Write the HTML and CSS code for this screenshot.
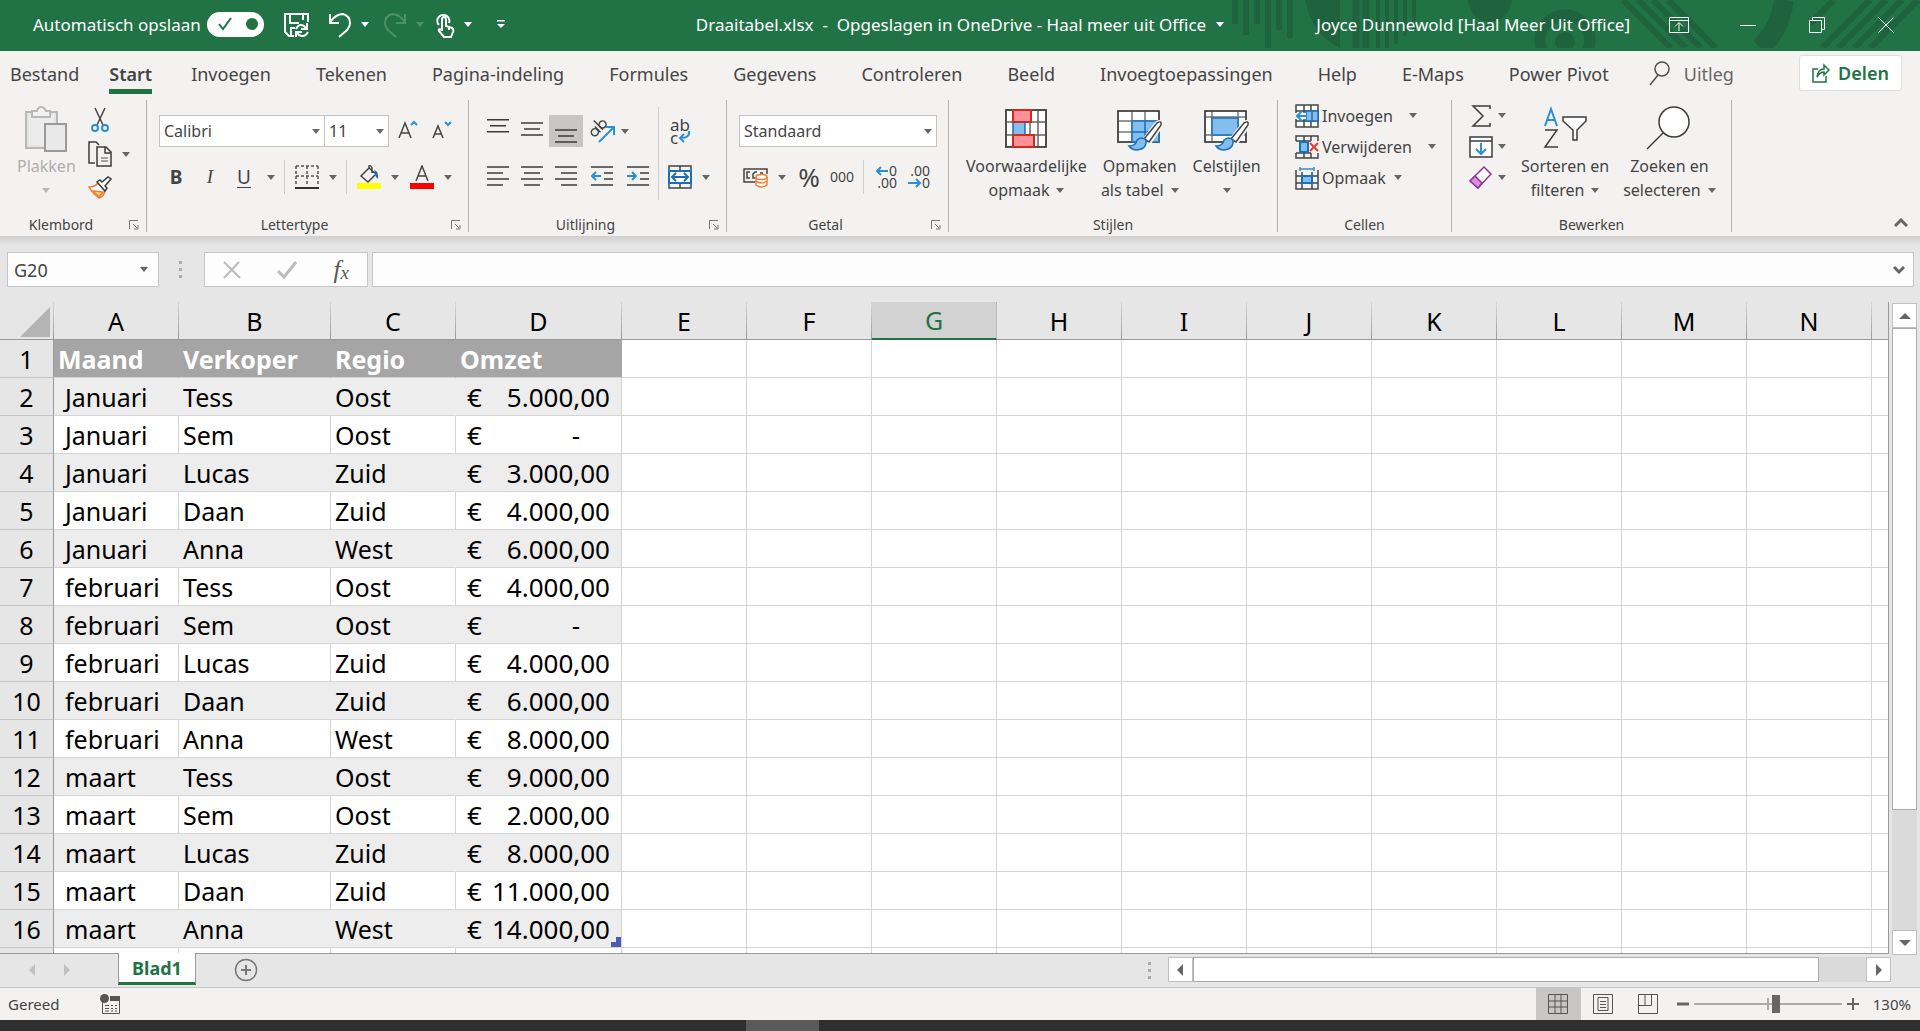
FILE: index.html
```html
<!DOCTYPE html>
<html lang="nl">
<head>
<meta charset="utf-8">
<title>Draaitabel.xlsx - Excel</title>
<link rel="stylesheet" href="styles.css">
</head>
<body>
<header class="titlebar">
  <svg class="titlebar-art" width="690" height="48" viewBox="0 0 690 48" aria-hidden="true">
    <g fill="none" stroke="#1e633d" stroke-width="6">
      <path d="M5 0V24M16 0V35M27 0V24M38 0V48M49 0V30M60 0V38"/>
      <path d="M126 0V48M136 0V48" stroke-width="7"/>
      <path d="M148 0V48M157 0V48M166 0V44M175 0V36M184 0V30" stroke-width="4"/>
      <circle cx="335" cy="40" r="25" stroke-width="11"/>
      <path d="M393 0L441 48M408 0L456 48M423 0L471 48M438 0L486 48"/>
      <path d="M554 0Q550 30 530 48" stroke-width="20"/>
      <path d="M592 48L640 0M608 48L656 0M624 48L672 0M640 48L688 0M580 24L604 0"/>
    </g>
    <path fill="#1e633d" d="M75 0H110V48Q82 35 75 0ZM238 0H282Q278 22 260 22T238 0Z"/>
    <circle cx="335" cy="42" r="10" fill="#1e633d"/>
  </svg>
  <div class="quick">
    <label class="autosave" for="autosave">Automatisch opslaan</label>
    <span class="switch"><input type="checkbox" id="autosave" checked><svg width="57" height="25" viewBox="0 0 57 25"><path d="M12 12L16 17L24 6" fill="none" stroke="#217346" stroke-width="2"/><ellipse cx="45" cy="12" rx="6" ry="6" fill="#217346"/></svg></span>
    <button class="qbtn save" aria-label="Opslaan"><svg width="26" height="26" viewBox="0 0 26 26" fill="none" stroke="#fff" stroke-width="2"><path d="M10 24H5L1 20V2H24V10M6 2V11H15M19 2V8M7 24V16H11"/><path d="M12 17Q15 11 20 14L23 17M23 11V17H17M24 20Q21 26 15 23L12 20M12 25V20H18"/></svg></button>
    <button class="qbtn" aria-label="Ongedaan maken"><svg width="24" height="26" viewBox="0 0 24 26" fill="none" stroke="#fff" stroke-width="2"><path d="M2 2V11H11M2 10Q8 2 15 2Q22 4 22 11Q22 15 18 19L11 25"/></svg></button>
    <i class="caret light"></i>
    <button class="qbtn redo" aria-label="Opnieuw"><svg width="24" height="26" viewBox="0 0 24 26" fill="none" stroke="#4d9169" stroke-width="2"><path d="M22 2V11H13M22 10Q16 2 9 2Q2 4 2 11Q2 15 6 19L13 25"/></svg></button>
    <i class="caret dim"></i>
    <button class="qbtn touch" aria-label="Aanraakmodus"><svg width="20" height="26" viewBox="0 0 20 26" fill="none" stroke="#fff" stroke-width="2"><path d="M4 13A6 6 0 1 1 14 11M7 19V8Q7 5 9 5T11 8V14L17 16Q19 17 18 20L16 25H9L4 19Q3 16 7 18M14 16V18"/></svg></button>
    <i class="caret light"></i>
    <button class="qbtn custom" aria-label="Werkbalk aanpassen"><svg width="10" height="10" viewBox="0 0 10 10"><path d="M1 0H9V1.500H1ZM1 4H9L5 8Z" fill="#fff"/></svg></button>
  </div>
  <button class="doc">Draaitabel.xlsx&nbsp; -&nbsp; Opgeslagen in OneDrive - Haal meer uit Office<i class="caret light"></i></button>
  <div class="account">
    <span class="user">Joyce Dunnewold [Haal Meer Uit Office]</span>
    <button class="win" aria-label="Lintopties"><svg width="20" height="16" viewBox="0 0 20 16" fill="none" stroke="#fff"><path d="M.5 .5H19.500V15.500H.5ZM.5 3.500H19.500M10 14V6M6 9.500L10 5.500L14 9.500"/></svg></button>
    <button class="win" aria-label="Minimaliseren"><svg width="16" height="16" viewBox="0 0 16 16" stroke="#fff"><path d="M0 8.500H16"/></svg></button>
    <button class="win" aria-label="Vorig formaat"><svg width="16" height="16" viewBox="0 0 16 16" fill="none" stroke="#fff"><path d="M.5 3.500H12.500V15.500H.5ZM3.500 3.500V.5H15.500V12.500H12.500"/></svg></button>
    <button class="win" aria-label="Sluiten"><svg width="16" height="16" viewBox="0 0 16 16" stroke="#fff"><path d="M.5 .5L15.500 15.500M15.500 .5L.5 15.500"/></svg></button>
  </div>
</header>

<nav class="tabs">
  <div class="tabs-first"><button>Bestand</button><button class="active">Start</button></div>
  <div class="tabs-main"><button>Invoegen</button><button>Tekenen</button><button>Pagina-indeling</button><button>Formules</button><button>Gegevens</button><button>Controleren</button><button>Beeld</button><button>Invoegtoepassingen</button><button>Help</button><button>E-Maps</button><button>Power Pivot</button></div>
  <button class="tell"><svg width="22" height="27" viewBox="0 0 22 27" fill="none" stroke="#505050" stroke-width="1.500"><circle cx="13" cy="9" r="7"/><path d="M9 15L1 25"/></svg>Uitleg</button>
  <button class="share"><svg width="18" height="22" viewBox="0 0 18 22" fill="none" stroke="#217346" stroke-width="1.500"><path d="M6 7H1V20H14V14M5 15Q6 7 12 7V3L17 8L12 13V10Q8 10 5 15Z"/></svg>Delen</button>
</nav>

<main class="ribbon">
  <section class="group g-clip">
    <div class="body">
      <button class="big off"><svg width="42" height="46" viewBox="0 0 42 46" fill="none" stroke="#b8b8b8" stroke-width="2"><path d="M1 6H32V18H20V42H1Z" fill="#e4e4e4"/><path d="M4 9H29V18H20V39H4Z" fill="#ececec" stroke="none"/><path d="M7 5H12Q13 1 16 1T21 5H25V11H7Z" fill="#f3f2f1"/><path d="M20 18H41V45H20Z" fill="#e9e9e9" stroke="#9a9a9a"/></svg><span>Plakken</span><i class="caret"></i></button>
      <div class="clip-col">
        <div><button aria-label="Knippen"><svg width="24" height="26" viewBox="0 0 24 26" fill="none" stroke="#444" stroke-width="1.500"><path d="M7 1L15 18M17 1L9 18"/><g stroke="#2b8fd4" stroke-width="2"><circle cx="7" cy="21" r="3"/><circle cx="17" cy="21" r="3"/></g></svg></button></div>
        <div><button aria-label="Kopiëren"><svg width="24" height="26" viewBox="0 0 24 26" fill="none" stroke="#3c3c3c" stroke-width="1.500"><path d="M7 22H1V1H8L11 4M9 6H18L23 11V25H9ZM17 6V12H23"/><path d="M13 17H20M13 20H20" stroke="#888"/></svg></button><i class="caret"></i></div>
        <div><button aria-label="Opmaak kopiëren"><svg width="24" height="24" viewBox="0 0 24 24" fill="none" stroke-width="1.500"><path d="M1 11Q7 11 10 7L17 15Q16 20 11 22Q5 18 1 11Z" fill="#fff" stroke="#ed7d31"/><path d="M5 15L15 16L11 21Z" fill="#ffd685" stroke="#ed7d31"/><path d="M9 6L12 4L14 6L20 1L23 3L17 10L19 12L17 15Z" fill="#fff" stroke="#3c3c3c"/></svg></button></div>
      </div>
    </div>
    <footer>Klembord<button class="launch" aria-label="Klembordopties"><svg width="10" height="10" viewBox="0 0 10 10"><path d="M.5 9V.5H9M4 4L8 8M9 5V9H5" fill="none" stroke="#777"/></svg></button></footer>
  </section>

  <section class="group g-font">
    <div class="body rows">
      <div class="row">
        <div class="combo font"><select aria-label="Lettertype"><option>Calibri</option></select><i class="caret"></i></div>
        <div class="combo size"><select aria-label="Tekengrootte"><option>11</option></select><i class="caret"></i></div>
        <button class="fs" aria-label="Groter"><svg width="22" height="22" viewBox="0 0 22 22" fill="none" stroke="#444" stroke-width="1.500"><path d="M1 18L7 3L13 18M3 13H11"/><path d="M13 5L16 2L19 5" stroke="#2b8fd4" stroke-width="2"/></svg></button>
        <button class="fs" aria-label="Kleiner"><svg width="22" height="22" viewBox="0 0 22 22" fill="none" stroke="#444" stroke-width="1.500"><path d="M1 18L6 6L11 18M3 14H9"/><path d="M13 2L16 5L19 2" stroke="#2b8fd4" stroke-width="2"/></svg></button>
      </div>
      <div class="row font-tools">
        <button class="ft b">B</button><button class="ft i">I</button><button class="ft u">U</button><i class="caret"></i><i class="vr"></i>
        <button aria-label="Randen"><svg width="24" height="24" viewBox="0 0 24 24" fill="none" stroke="#555" stroke-width="1.500"><path d="M1 1H23M1 1V21M23 1V21M12 1V21M1 11H23" stroke-dasharray="3 2"/><path d="M0 23H24" stroke="#333" stroke-width="2"/></svg></button><i class="caret"></i><i class="vr"></i>
        <button aria-label="Opvulkleur"><svg width="24" height="24" viewBox="0 0 24 24" fill="none" stroke="#444" stroke-width="1.500"><path d="M4 11L12 3L19 9L11 17ZM12 3V1Q14 0 15 3V8"/><path d="M17 5Q22 6 21 14Q18 12 18 7Z" fill="#1a6fbd" stroke="none"/><path d="M0 18H24V24H0Z" fill="#ff0" stroke="none"/></svg></button><i class="caret"></i>
        <button aria-label="Tekstkleur"><svg width="24" height="24" viewBox="0 0 24 24" fill="none" stroke="#444" stroke-width="1.500"><path d="M6 16L12 1L18 16M8 11H16"/><path d="M0 18H24V24H0Z" fill="#f00" stroke="none"/></svg></button><i class="caret"></i>
      </div>
    </div>
    <footer>Lettertype<button class="launch" aria-label="Lettertypeopties"><svg width="10" height="10" viewBox="0 0 10 10"><path d="M.5 9V.5H9M4 4L8 8M9 5V9H5" fill="none" stroke="#777"/></svg></button></footer>
  </section>

  <section class="group g-align">
    <div class="body">
      <div class="rows">
        <div class="row">
          <button class="al" aria-label="Boven"><svg width="22" height="24" viewBox="0 0 22 24" stroke="#3c3c3c" stroke-width="1.500"><path d="M0 0.750H22M3 6.750H19M0 12.750H22"/></svg></button>
          <button class="al" aria-label="Midden"><svg width="22" height="24" viewBox="0 0 22 24" stroke="#3c3c3c" stroke-width="1.500"><path d="M0 4H22M3 10H19M0 16H22"/></svg></button>
          <button class="al on" aria-label="Onder"><svg width="22" height="24" viewBox="0 0 22 24" stroke="#3c3c3c" stroke-width="1.500"><path d="M0 11H22M3 17H19M0 23H22"/></svg></button>
          <button class="al wide" aria-label="Afdrukstand"><svg width="26" height="26" viewBox="0 0 26 26" fill="none" stroke="#444" stroke-width="1.500"><g transform="rotate(-45 9 11)"><circle cx="4.500" cy="11" r="3.500"/><path d="M8.500 7V15M12 2V15"/><circle cx="15.500" cy="11" r="3.500"/></g><path d="M10 24L24 10M17 9H25V17" stroke="#2b8fd4" stroke-width="2"/></svg></button><i class="caret"></i>
        </div>
        <div class="row">
          <button class="al" aria-label="Links"><svg width="22" height="24" viewBox="0 0 22 24" stroke="#3c3c3c" stroke-width="1.500"><path d="M0 2H22M0 8H16M0 14H22M0 20H16"/></svg></button>
          <button class="al" aria-label="Centreren"><svg width="22" height="24" viewBox="0 0 22 24" stroke="#3c3c3c" stroke-width="1.500"><path d="M0 2H22M3 8H19M0 14H22M3 20H19"/></svg></button>
          <button class="al" aria-label="Rechts"><svg width="22" height="24" viewBox="0 0 22 24" stroke="#3c3c3c" stroke-width="1.500"><path d="M0 2H22M6 8H22M0 14H22M6 20H22"/></svg></button>
          <button class="al wide" aria-label="Inspringing verkleinen"><svg width="22" height="24" viewBox="0 0 22 24" fill="none" stroke="#3c3c3c" stroke-width="1.500"><path d="M0 2H22M13 8H22M13 14H22M0 20H22"/><path d="M10 11H2M5 7L1 11L5 15" stroke="#2b8fd4" stroke-width="2"/></svg></button>
          <button class="al" aria-label="Inspringing vergroten"><svg width="22" height="24" viewBox="0 0 22 24" fill="none" stroke="#3c3c3c" stroke-width="1.500"><path d="M0 2H22M13 8H22M13 14H22M0 20H22"/><path d="M0 11H8M5 7L9 11L5 15" stroke="#2b8fd4" stroke-width="2"/></svg></button>
        </div>
      </div>
      <i class="vr tall"></i>
      <div class="rows">
        <div class="row"><button class="wrap" aria-label="Terugloop"><span>ab</span><span>c<svg width="12" height="12" viewBox="0 0 12 12" fill="none" stroke="#2b8fd4" stroke-width="2"><path d="M11 0Q12 7 3 7M6 3L2 7L6 11"/></svg></span></button></div>
        <div class="row merge"><button aria-label="Samenvoegen"><svg width="24" height="24" viewBox="0 0 24 24" fill="none" stroke="#444" stroke-width="1.500"><path d="M1 1H23V23H1ZM12 1V23"/><path d="M1 6H23V18H1Z" fill="#fff" stroke="#1a6fbd" stroke-width="2"/><path d="M4 12H20M8 8L4 12L8 16M16 8L20 12L16 16" stroke="#1a6fbd" stroke-width="2"/></svg></button><i class="caret"></i></div>
      </div>
    </div>
    <footer>Uitlijning<button class="launch" aria-label="Uitlijningsopties"><svg width="10" height="10" viewBox="0 0 10 10"><path d="M.5 9V.5H9M4 4L8 8M9 5V9H5" fill="none" stroke="#777"/></svg></button></footer>
  </section>

  <section class="group g-number">
    <div class="body rows">
      <div class="row"><div class="combo format"><select aria-label="Getalnotatie"><option>Standaard</option></select><i class="caret"></i></div></div>
      <div class="row num-tools">
        <button aria-label="Valuta"><svg width="26" height="24" viewBox="0 0 26 24" fill="none" stroke="#444" stroke-width="1.500"><path d="M12 17H1V4H24V9M7 7H4V13H7M12 13H10V9L12 7H14M17 8H20"/><g stroke="#ed7d31" fill="#fff"><path d="M13 12V20Q18 24 24 20V12"/><ellipse cx="18.500" cy="12" rx="5.500" ry="2.500"/><path d="M13 16Q18 20 24 16" fill="none"/></g></svg></button><i class="caret"></i>
        <button class="pct">%</button><button class="thou">000</button><i class="vr"></i>
        <button class="dec" aria-label="Meer decimalen"><span><svg width="14" height="12" viewBox="0 0 14 12" fill="none" stroke="#2b8fd4" stroke-width="2"><path d="M13 6H2M6 2L2 6L6 10"/></svg>0</span><span>.00</span></button>
        <button class="dec" aria-label="Minder decimalen"><span>.00</span><span><svg width="14" height="12" viewBox="0 0 14 12" fill="none" stroke="#2b8fd4" stroke-width="2"><path d="M0 6H12M8 2L12 6L8 10"/></svg>0</span></button>
      </div>
    </div>
    <footer>Getal<button class="launch" aria-label="Getalopties"><svg width="10" height="10" viewBox="0 0 10 10"><path d="M.5 9V.5H9M4 4L8 8M9 5V9H5" fill="none" stroke="#777"/></svg></button></footer>
  </section>

  <section class="group g-styles">
    <div class="body">
      <button class="big"><svg width="42" height="46" viewBox="0 0 42 46" fill="none" stroke="#666" stroke-width="1.500"><path d="M1 4H41V41H1ZM33 4V41M25 4V41M1 16H41M1 29H41" fill="#fff"/><path d="M1 4H41V41H1Z" stroke="#3c3c3c"/><path d="M8 16H20V29H8Z" fill="#83beec" stroke="#1a6fbd"/><g fill="#ff9198" stroke="#d4281e" stroke-width="2"><path d="M8 4H26V16H8ZM8 29H29V41H8Z"/></g></svg><span>Voorwaardelijke</span><span>opmaak<i class="caret"></i></span></button>
      <button class="big"><svg width="46" height="46" viewBox="0 0 46 46" fill="none" stroke="#777" stroke-width="1.500"><path d="M1 5H42V36H1ZM15 5V36M28 5V36M1 15H42M1 26H42" fill="#fff"/><path d="M1 5H42V36H1Z" stroke="#3c3c3c"/><path d="M15 15H42V36H15ZM28 15V36M15 26H42" fill="#83beec" stroke="#1a6fbd"/><path d="M27 34L40 17Q45 14 44 20L33 36Z" fill="#fff" stroke="#f3f2f1" stroke-width="4"/><path d="M27 33L40 17Q45 14 44 19L32 36Z" fill="#fff" stroke="#444"/><path d="M12 40Q19 40 20 34Q25 30 29 34Q30 43 20 44Q15 44 12 40Z" fill="#83beec" stroke="#1a6fbd"/></svg><span>Opmaken</span><span>als tabel<i class="caret"></i></span></button>
      <button class="big"><svg width="46" height="46" viewBox="0 0 46 46" fill="none" stroke="#777" stroke-width="1.500"><path d="M1 5H42V36H1ZM8 5V36M34 5V36M1 11H42M1 29H42" fill="#fff"/><path d="M1 5H42V36H1Z" stroke="#3c3c3c"/><path d="M8 12H34V29H8Z" fill="#83beec" stroke="#1a6fbd"/><path d="M27 34L40 17Q45 14 44 20L33 36Z" fill="#fff" stroke="#f3f2f1" stroke-width="4"/><path d="M27 33L40 17Q45 14 44 19L32 36Z" fill="#fff" stroke="#444"/><path d="M12 40Q19 40 20 34Q25 30 29 34Q30 43 20 44Q15 44 12 40Z" fill="#83beec" stroke="#1a6fbd"/></svg><span>Celstijlen</span><i class="caret"></i></button>
    </div>
    <footer>Stijlen</footer>
  </section>

  <section class="group g-cells">
    <div class="body cell-col">
      <button><svg width="24" height="24" viewBox="0 0 24 24" fill="none" stroke="#444" stroke-width="1.500"><path d="M1 1H23V23H1ZM9 1V23M16 1V23M1 7H23M1 17H23" fill="#fff"/><path d="M11 7H23V17H11ZM17 7V17" fill="#83beec" stroke="#1a6fbd"/><path d="M11 12H0" stroke="#f3f2f1" stroke-width="6"/><path d="M11 12H2M7 7L2 12L7 17" stroke="#2b8fd4" stroke-width="2"/></svg>Invoegen<i class="caret far"></i></button>
      <button><svg width="24" height="24" viewBox="0 0 24 24" fill="none" stroke="#444" stroke-width="1.500"><path d="M1 6V1H23V6M9 1V6M16 1V6M1 6H16M1 18V23H23V18M1 18H16M9 18V23M16 18V23"/><path d="M5 7H13V17H5Z" fill="#83beec" stroke="#1a6fbd" stroke-width="2"/><path d="M15 8L23 16M23 8L15 16" stroke="#e8392d" stroke-width="2"/></svg>Verwijderen<i class="caret far"></i></button>
      <button><svg width="24" height="24" viewBox="0 0 24 24" fill="none" stroke="#444" stroke-width="1.500"><path d="M1 4V23H23V4M7 6V23M17 6V23M1 10H23M1 17H23"/><path d="M7 10H17V17H7Z" fill="#83beec" stroke="#1a6fbd" stroke-width="2"/><path d="M5 1V5M19 1V5M5 3H19" stroke="#2b8fd4"/></svg>Opmaak<i class="caret"></i></button>
    </div>
    <footer>Cellen</footer>
  </section>

  <section class="group g-edit">
    <div class="body">
      <div class="edit-col">
        <button aria-label="AutoSom"><svg width="24" height="24" viewBox="0 0 24 24" fill="none" stroke="#3c3c3c" stroke-width="1.500"><path d="M21 5V2H4L14 12L4 22H21V19"/></svg><i class="caret"></i></button>
        <button aria-label="Doorvoeren"><svg width="24" height="24" viewBox="0 0 24 24" fill="none" stroke="#3c3c3c" stroke-width="1.500"><path d="M1 2H23V22H1ZM1 6H23" fill="#fff"/><path d="M12 8V19M7 14L12 19L17 14" stroke="#2b8fd4" stroke-width="2"/></svg><i class="caret"></i></button>
        <button aria-label="Wissen"><svg width="24" height="24" viewBox="0 0 24 24" fill="none" stroke="#9332a0" stroke-width="1.500"><path d="M15 1L22 8L9 22L1 15Z" fill="#fff"/><path d="M6 10L13 17L9 22L1 15Z" fill="#d792dc"/></svg><i class="caret"></i></button>
      </div>
      <button class="big"><svg width="44" height="46" viewBox="0 0 44 46" fill="none" stroke="#3c3c3c" stroke-width="1.500"><path d="M2 20L8 3L14 20M4 14H12" stroke="#2b8fd4" stroke-width="2"/><path d="M2 24H14L2 41H15"/><path d="M20 11H43V15L34 24V34H30V24L20 15Z" fill="#fff"/></svg><span>Sorteren en</span><span>filteren<i class="caret"></i></span></button>
      <button class="big"><svg width="46" height="46" viewBox="0 0 46 46" fill="none" stroke="#3c3c3c" stroke-width="1.500"><circle cx="28" cy="16" r="15" fill="#fff"/><path d="M17 27L1 43"/></svg><span>Zoeken en</span><span>selecteren<i class="caret"></i></span></button>
    </div>
    <footer>Bewerken</footer>
  </section>
  <button class="collapse" aria-label="Lint samenvouwen"><svg width="14" height="10" viewBox="0 0 14 10"><path d="M1 8L7 2L13 8" fill="none" stroke="#666" stroke-width="3"/></svg></button>
</main>

<div class="formula">
  <div class="namebox"><input aria-label="Naamvak" value="G20"><i class="caret"></i></div>
  <i class="dots"></i>
  <div class="fx-tools">
    <button aria-label="Annuleren"><svg width="18" height="18" viewBox="0 0 18 18"><path d="M1 1L17 17M16 1L1 17" stroke="#bbb" stroke-width="2"/></svg></button>
    <button aria-label="Invoeren"><svg width="20" height="18" viewBox="0 0 20 18"><path d="M1 10L7 16L19 1" fill="none" stroke="#bbb" stroke-width="3"/></svg></button>
    <button class="fx">f<small>x</small></button>
  </div>
  <div class="fbar"><input aria-label="Formulebalk"><svg width="12" height="10" viewBox="0 0 12 10"><path d="M1 2L6 7L11 2" fill="none" stroke="#666" stroke-width="3"/></svg></div>
</div>

<div class="sheet">
  <div class="grid">
    <table>
      <colgroup><col class="c-row"><col class="c-std"><col class="c-b"><col class="c-std"><col class="c-d"><col class="c-std"><col class="c-std"><col class="c-std"><col class="c-std"><col class="c-std"><col class="c-std"><col class="c-std"><col class="c-std"><col class="c-std"><col class="c-std"><col></colgroup>
      <thead><tr><th class="corner"><svg width="30" height="30" viewBox="0 0 30 30"><path d="M30 0V30H0Z" fill="#b4b4b4"/></svg></th><th>A</th><th>B</th><th>C</th><th>D</th><th>E</th><th>F</th><th class="sel">G</th><th>H</th><th>I</th><th>J</th><th>K</th><th>L</th><th>M</th><th>N</th><th></th></tr></thead>
      <tbody id="rows"></tbody>
    </table>
  </div>
  <div class="vscroll"><button aria-label="Omhoog"><i class="tri up"></i></button><div class="vtrack"><div class="vthumb"></div></div><button aria-label="Omlaag"><i class="tri down"></i></button></div>
</div>

<div class="sheetbar">
  <div class="sheetnav"><i class="tri left pale"></i><i class="tri right pale"></i></div>
  <button class="sheettab">Blad1</button>
  <button class="add" aria-label="Nieuw blad"><svg width="24" height="24" viewBox="0 0 24 24" fill="none" stroke="#777"><circle cx="12" cy="12" r="10.500" stroke-width="1.500"/><path d="M12 7V17M7 12H17" stroke-width="2"/></svg></button>
  <i class="dots"></i>
  <div class="hscroll"><button aria-label="Naar links"><i class="tri left"></i></button><div class="htrack"><div class="hthumb"></div></div><button aria-label="Naar rechts"><i class="tri right"></i></button></div>
</div>

<footer class="status">
  <span>Gereed</span>
  <button class="macro" aria-label="Macro opnemen"><svg width="20" height="20" viewBox="0 0 20 20" fill="none" stroke="#555"><path d="M2.500 8V19.500H19.500V3M5 11.500H9M11 11.500H13M15 11.500H17M5 14.500H9M11 14.500H13M15 14.500H17M5 17H9M11 17H13M15 17H17"/><path d="M10 2H20V7H10Z" fill="#555" stroke="none"/><circle cx="4.500" cy="4.500" r="4.500" fill="#555" stroke="none"/></svg></button>
  <div class="views">
    <button class="on" aria-label="Normaal"><svg width="20" height="20" viewBox="0 0 20 20" fill="none" stroke="#555"><path d="M.5 .5H19.500V19.500H.5ZM7 .5V19.500M13 .5V19.500M.5 7H19.500M.5 13H19.500"/></svg></button>
    <button aria-label="Pagina-indeling"><svg width="20" height="20" viewBox="0 0 20 20" fill="none" stroke="#555"><path d="M.5 .5H19.500V19.500H.5ZM5 3.500H15V16.500H5ZM7 7.500H13M7 10.500H13M7 13.500H13"/></svg></button>
    <button aria-label="Pagina-eindevoorbeeld"><svg width="20" height="20" viewBox="0 0 20 20" fill="none" stroke="#555"><path d="M.5 .5H19.500V19.500H.5ZM.5 11.500H13.500V.5M7 .5V11.500"/></svg></button>
  </div>
  <button class="zoom-step minus" aria-label="Uitzoomen"><svg width="14" height="14" viewBox="0 0 14 14"><path d="M1 7H13" stroke="#666" stroke-width="3"/></svg></button>
  <input class="zoom" type="range" aria-label="In-/uitzoomen" min="0" max="100" value="56">
  <button class="zoom-step" aria-label="Inzoomen"><svg width="14" height="14" viewBox="0 0 14 14"><path d="M1 7H13M7 1V13" stroke="#666" stroke-width="2"/></svg></button>
  <button class="pctlabel">130%</button>
</footer>
<div class="taskbar"><div class="task"></div><span>09:14</span></div>
<script src="sheet.js"></script>
</body>
</html>
```
FILE: sheet.js
```js
const months = ["Januari", "februari", "maart"];
const sellers = [["Tess", "Oost"], ["Sem", "Oost"], ["Lucas", "Zuid"], ["Daan", "Zuid"], ["Anna", "West"]];
const sales = [
  "5.000,00", "-", "3.000,00", "4.000,00", "6.000,00",
  "4.000,00", "-", "4.000,00", "6.000,00", "8.000,00",
  "9.000,00", "2.000,00", "8.000,00", "11.000,00", "14.000,00"
];
const empty = "<td></td>".repeat(11);
let html = `<tr class="head"><th>1</th><td>Maand</td><td>Verkoper</td><td>Regio</td><td>Omzet</td>${empty}</tr>`;
sales.forEach((amount, i) => {
  const [name, region] = sellers[i % 5];
  const cls = i % 2 === 0 ? "band" : "";
  const zero = amount === "-" ? " zero" : "";
  const end = i === sales.length - 1 ? '<i class="table-end"></i>' : "";
  html += `<tr class="${cls}"><th>${i + 2}</th><td class="month">${months[Math.floor(i / 5)]}</td><td>${name}</td><td>${region}</td><td class="money${zero}"><div><span>€</span><span>${amount}</span></div>${end}</td>${empty}</tr>`;
});
html += `<tr><th></th>${"<td></td>".repeat(15)}</tr>`;
document.getElementById("rows").innerHTML = html;
```
FILE: styles.css
```css
* { box-sizing: border-box; }
body {
  margin: 0;
  height: 100vh;
  display: flex;
  flex-direction: column;
  overflow: hidden;
  background: #e6e6e6;
  color: #444;
  font: 16px/24px "Noto Sans", sans-serif;
}
button, input, select { font: inherit; color: inherit; margin: 0; padding: 0; border: 0; background: none; border-radius: 0; }
button { display: flex; align-items: center; justify-content: center; white-space: nowrap; }
svg { display: block; flex: none; }
.caret { flex: none; border: 4px solid transparent; border-top: 5px solid #666; border-bottom: 0; }
.caret.light { border-top-color: #fff; }
.caret.dim { border-top-color: #4d9169; }

/* Title bar */
.titlebar {
  position: relative;
  flex: none;
  height: 51px;
  padding-bottom: 2px;
  display: grid;
  grid-template-columns: 1fr auto 1fr;
  align-items: center;
  background: #217346;
  color: #fff;
  font-size: 17px;
}
.titlebar-art { position: absolute; top: 0; right: 0; }
.quick, .doc, .account { position: relative; display: flex; align-items: center; white-space: nowrap; }
.quick { padding-left: 33px; }
.switch { display: flex; margin: 0 20px 0 6px; background: #fff; border-radius: 13px; }
.switch input { position: absolute; opacity: 0; }
.save { margin-right: 18px; }
.redo { margin-left: 14px; }
.qbtn + .caret { margin-left: 9px; }
.touch { margin-left: 11px; }
.custom { margin-left: 24px; }
.doc { gap: 10px; }
.account { justify-content: flex-end; }
.user { margin-right: 14px; }
.win { width: 69px; height: 49px; }

/* Ribbon tabs */
.tabs { flex: none; display: flex; align-items: flex-start; height: 47px; padding-left: 10px; background: #f3f2f1; font-size: 18px; }
.tabs button { height: 43px; padding-top: 2px; }
.tabs-first { display: flex; gap: 30px; margin-right: 39px; }
.tabs-main { display: flex; gap: 45px; }
.tabs .active { font-weight: 600; border-bottom: 5px solid #217346; padding: 7px 0 0; }
.tabs .tell { gap: 13px; margin-left: 40px; color: #666; }
.tabs .share { gap: 8px; width: 103px; height: 36px; margin: 4px 18px 0 auto; padding: 0; background: #fff; border: 1px solid #e1dfdd; border-radius: 3px; color: #217346; font-weight: 600; }

/* Ribbon */
.ribbon { flex: none; display: flex; padding: 2px 0 4px; background: #f3f2f1; }
.group { flex: none; display: flex; flex-direction: column; height: 132px; border-right: 1px solid #b4b2b0; }
.g-clip { width: 147px; }
.g-font { width: 322px; }
.g-align { width: 258px; }
.g-number { width: 222px; }
.g-styles { width: 329px; }
.g-cells { width: 174px; }
.g-edit { width: 280px; }
.body { flex: 1; display: flex; }
.group footer { position: relative; text-align: center; font-size: 14px; line-height: 18px; height: 16px; }
.g-clip footer { padding-right: 24px; }
.g-font footer { padding-right: 26px; }
.g-align footer, .g-number footer { padding-right: 24px; }
.launch { position: absolute; right: 7px; top: 4px; }
.big { flex-direction: column; justify-content: flex-start; padding-top: 6px; }
.big svg { margin-bottom: 2px; }
.big span { display: flex; align-items: center; gap: 7px; height: 24px; }
.big > .caret { margin-top: 10px; }
.off { color: #b0aeac; margin-left: 17px; }
.off .caret { border-top-color: #b8b8b8; }
.clip-col { margin-left: 12px; padding-top: 3px; }
.clip-col div { display: flex; align-items: center; height: 34px; gap: 10px; }
.rows { display: flex; flex-direction: column; gap: 14px; padding-top: 15px; }
.row { display: flex; align-items: center; height: 32px; }
.vr { flex: none; width: 1px; height: 34px; background: #d0cecc; }
.combo { position: relative; display: flex; align-items: center; height: 32px; background: #fff; border: 1px solid #c6c4c2; }
.combo select { width: 100%; height: 30px; padding-left: 4px; appearance: none; outline: 0; }
.combo .caret { position: absolute; right: 4px; }
.font { width: 166px; }
.size { width: 64px; border-left: 0; }
.g-font .row { padding-left: 12px; }
.fs { margin-left: 9px; }
.fs + .fs { margin-left: 12px; }
.g-font .font-tools { padding-left: 12px; }
.ft { width: 34px; font-size: 19px; }
.b { font-weight: 700; }
.i { font-family: "Liberation Serif", serif; font-style: italic; }
.u { text-decoration: underline; text-underline-offset: 3px; }
.font-tools .caret { margin-left: 10px; }
.font-tools .ft + .caret { margin-left: 6px; }
.font-tools .vr { margin: 0 10px 0 9px; }
.font-tools .caret + button { margin-left: 11px; }
.g-align .rows:first-child { padding-left: 12px; }
.al { width: 34px; height: 32px; }
.al.on { background: #c8c6c4; }
.al.wide { width: 38px; }
.vr.tall { height: 93px; margin: 7px 9px 0 3px; }
.wrap { flex-direction: column; align-items: flex-start; margin-left: 2px; line-height: 13px; font-size: 17px; }
.wrap span { display: flex; height: 13px; }
.merge .caret { margin-left: 10px; }
.format { width: 198px; }
.g-number .rows { padding-left: 12px; }
.num-tools { padding-left: 4px; }
.num-tools .caret { margin: 0 10px 0 9px; }
.pct { width: 26px; font-size: 26px; }
.thou { width: 28px; margin: 0 7px 0 6px; font-size: 14px; }
.dec { flex-direction: column; align-items: flex-end; width: 25px; margin-left: 8px; font-size: 14px; }
.dec span { display: flex; align-items: center; height: 12px; line-height: 12px; }
.g-styles .body { padding-left: 17px; gap: 14px; }
.cell-col { flex-direction: column; padding-left: 17px; }
.cell-col button { justify-content: flex-start; height: 31px; gap: 3px; }
.cell-col .caret { margin-left: 5px; }
.cell-col .far { margin-left: 13px; }
.edit-col { padding: 0 15px 0 17px; }
.edit-col button { height: 31px; gap: 5px; }
.g-edit .big + .big { margin-left: 14px; }
.collapse { margin: auto 12px 4px auto; }

/* Formula bar */
.formula { flex: none; display: flex; height: 66px; padding: 16px 6px 15px 7px; background: linear-gradient(#cfcfcf, #e6e6e6 10px); }
.namebox, .fx-tools, .fbar { display: flex; align-items: center; background: #fdfdfd; border: 1px solid #c6c6c6; }
.namebox { width: 152px; padding-right: 10px; font-size: 18px; }
.namebox input { flex: 1; min-width: 0; padding-left: 6px; outline: 0; }
.dots { flex: none; align-self: center; width: 3px; height: 17px; background: repeating-linear-gradient(#aaa 0 3px, transparent 3px 7px); }
.formula .dots { margin: 0 22px 0 20px; }
.fx-tools { width: 164px; padding: 0 18px; justify-content: space-between; }
.fx { font: italic 25px/24px "Liberation Serif", serif; color: #555; -webkit-text-stroke: 0; }
.fx small { font-size: 19px; padding-top: 6px; }
.fbar { flex: 1; margin-left: 4px; padding-right: 8px; }
.fbar input { flex: 1; outline: 0; }

/* Sheet */
.sheet { flex: 1; min-height: 0; display: flex; }
.grid { flex: 1; min-width: 0; overflow: hidden; border-bottom: 1px solid #999; }
table { width: 100%; table-layout: fixed; border-collapse: separate; border-spacing: 0; background: #fff; color: #000; font-size: 25px; line-height: 36px; border-right: 1px solid #999; }
.c-row { width: 54px; }
.c-std { width: 125px; }
.c-b { width: 152px; }
.c-d { width: 166px; }
th { padding: 0; font-weight: 400; background: #e6e6e6; }
thead th { height: 38px; border-bottom: 1px solid #999; border-right: 1px solid; border-image: linear-gradient(#d8d8d8, #999) 1; }
thead th:last-child { border-right-width: 0; }
thead .sel { background: #d2d2d2; color: #217346; border-bottom: 2px solid #217346; border-image: none; border-right-color: #b8b8b8; }
.corner svg { margin: 5px 0 2px 20px; }
tbody th { border-right: 1px solid #999; border-bottom: 1px solid #c4c4c4; }
td { height: 38px; padding: 0 0 0 4px; border-right: 1px solid #d4d4d4; border-bottom: 1px solid #d4d4d4; }
td:last-child { border-right: 0; }
.month { padding-left: 11px; }
.head td:nth-child(-n+5) { background: #a5a5a5; border-right-color: #a5a5a5; color: #fff; font-weight: 700; }
.band td:nth-child(-n+5) { background: #ededed; border-right-color: #ededed; }
.band td:nth-child(5) { border-right-color: #d4d4d4; }
.money { position: relative; padding: 0 11px; font-size: 26px; }
.money div { display: flex; justify-content: space-between; }
.zero { padding-right: 41px; }
.table-end { position: absolute; right: 0; bottom: 0; width: 10px; height: 10px; background: #4a5bb0; clip-path: polygon(50% 0, 100% 0, 100% 100%, 0 100%, 0 50%, 50% 50%); }
.vscroll { width: 31px; padding: 1px 3px 0; display: flex; flex-direction: column; margin-bottom: -1px; z-index: 1; }
.vscroll button { height: 25px; background: #fff; border: 1px solid #c0c0c0; }
.vtrack { flex: 1; background: #dadada; }
.vthumb { height: 80%; background: #fff; border: 1px solid #ababab; }
.tri { border: 6px solid transparent; }
.up { border-top: 0; border-bottom-color: #666; }
.down { border-bottom: 0; border-top-color: #666; }
.left { border-left: 0; border-right-color: #666; }
.right { border-right: 0; border-left-color: #666; }
.left.pale { border-right-color: #c0c0c0; }
.right.pale { border-left-color: #c0c0c0; }

/* Sheet tabs */
.sheetbar { flex: none; display: flex; height: 34px; padding: 0 29px 1px 0; border-bottom: 1px solid #c6c6c6; }
.sheetnav { display: flex; align-items: center; gap: 29px; width: 118px; padding-left: 29px; }
.sheettab { width: 78px; height: 32px; margin-top: -1px; background: #fff; border: 1px solid #999; border-width: 0 1px 3px; border-bottom-color: #217346; color: #217346; font-size: 18px; font-weight: 700; }
.add { margin-left: 38px; }
.sheetbar .dots { margin: 0 17px 0 auto; }
.hscroll { width: 38.25%; display: flex; height: 25px; margin-top: 3px; }
.hscroll button { width: 25px; background: #fff; border: 1px solid #c0c0c0; }
.htrack { flex: 1; background: #dadada; }
.hthumb { width: 93%; height: 100%; background: #fff; border: 1px solid #ababab; }

/* Status bar */
.status { flex: none; display: flex; align-items: center; height: 32px; padding: 0 9px 1px 8px; background: #f3f2f1; font-size: 15px; }
.macro { margin-left: 41px; }
.views { display: flex; margin-left: auto; }
.views button { width: 45px; height: 32px; }
.views .on { background: #c8c6c4; }
.minus { margin-left: 5px; }
.zoom { width: 148px; height: 18px; margin: 0 4px; appearance: none; background: linear-gradient(#ababab, #ababab) center / 100% 2px no-repeat, linear-gradient(#ababab, #ababab) center / 2px 12px no-repeat; }
.zoom::-webkit-slider-thumb { appearance: none; width: 8px; height: 18px; background: #666; }
.pctlabel { margin-left: 13px; }
.taskbar { flex: none; display: flex; justify-content: space-between; height: 11px; overflow: hidden; padding: 0 110px 0 746px; background: #2f2f2f; color: #fff; font-size: 15px; }
.task { width: 73px; background: #5a5a5a; }
.taskbar span { padding-top: 3px; }
```
